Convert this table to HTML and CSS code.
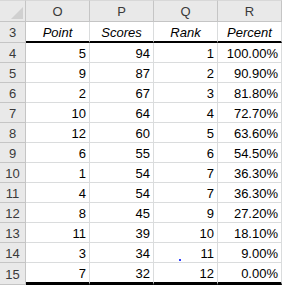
FILE: index.html
```html
<!DOCTYPE html>
<html>
<head>
<meta charset="utf-8">
<link rel="stylesheet" href="styles.css">
</head>
<body>
<div class="sheet">
  <div class="hdr corner"><svg class="tri" width="12" height="12" viewBox="0 0 12 12"><polygon points="12,0 12,12 0,12" fill="#d0d0d0"/></svg></div>
  <div class="hdr col">O</div>
  <div class="hdr col">P</div>
  <div class="hdr col">Q</div>
  <div class="hdr col">R</div>

  <div class="hdr rowh">3</div>
  <div class="cell title">Point</div>
  <div class="cell title">Scores</div>
  <div class="cell title">Rank</div>
  <div class="cell title">Percent</div>

  <div class="hdr rowh">4</div><div class="cell num">5</div><div class="cell num">94</div><div class="cell num">1</div><div class="cell num">100.00%</div>
  <div class="hdr rowh">5</div><div class="cell num">9</div><div class="cell num">87</div><div class="cell num">2</div><div class="cell num">90.90%</div>
  <div class="hdr rowh">6</div><div class="cell num">2</div><div class="cell num">67</div><div class="cell num">3</div><div class="cell num">81.80%</div>
  <div class="hdr rowh">7</div><div class="cell num">10</div><div class="cell num">64</div><div class="cell num">4</div><div class="cell num">72.70%</div>
  <div class="hdr rowh">8</div><div class="cell num">12</div><div class="cell num">60</div><div class="cell num">5</div><div class="cell num">63.60%</div>
  <div class="hdr rowh">9</div><div class="cell num">6</div><div class="cell num">55</div><div class="cell num">6</div><div class="cell num">54.50%</div>
  <div class="hdr rowh">10</div><div class="cell num">1</div><div class="cell num">54</div><div class="cell num">7</div><div class="cell num">36.30%</div>
  <div class="hdr rowh">11</div><div class="cell num">4</div><div class="cell num">54</div><div class="cell num">7</div><div class="cell num">36.30%</div>
  <div class="hdr rowh">12</div><div class="cell num">8</div><div class="cell num">45</div><div class="cell num">9</div><div class="cell num">27.20%</div>
  <div class="hdr rowh">13</div><div class="cell num">11</div><div class="cell num">39</div><div class="cell num">10</div><div class="cell num">18.10%</div>
  <div class="hdr rowh">14</div><div class="cell num">3</div><div class="cell num">34</div><div class="cell num">11</div><div class="cell num">9.00%</div>
  <div class="hdr rowh last">15</div><div class="cell num last">7</div><div class="cell num last">32</div><div class="cell num last">12</div><div class="cell num last">0.00%</div>
  <div class="dot"></div>
</div>
</body>
</html>
```

FILE: styles.css
```css
html, body {
  margin: 0;
  padding: 0;
  background: #ffffff;
}
.sheet {
  position: relative;
  display: grid;
  grid-template-columns: 26px 64px 64px 64px 64px;
  grid-template-rows: 22px 21px repeat(11, 20px) 22px;
  width: 283px;
  height: 285px;
  font-family: "Liberation Sans", Arial, sans-serif;
  font-size: 13px;
  color: #000;
  overflow: hidden;
}
.hdr {
  box-sizing: border-box;
  background: #e9e9e9;
  border-right: 1px solid #c5c5c5;
  border-bottom: 1px solid #c5c5c5;
  color: #3a3a3a;
  display: flex;
  align-items: center;
  justify-content: center;
}
.corner {
  position: relative;
  border-top: 1px solid #d8d8d8;
}
.tri {
  position: absolute;
  right: 2px;
  bottom: 2px;
}
.col {
  border-top: 1px solid #d8d8d8;
}
.rowh {
  padding-top: 1px;
}
.cell {
  box-sizing: border-box;
  border-right: 1px solid #dadcdd;
  border-bottom: 1px solid #dadcdd;
  display: flex;
  align-items: center;
  padding-top: 1px;
}
.title {
  justify-content: center;
  font-style: italic;
  border-bottom: 2px solid #000;
}
.num {
  justify-content: flex-end;
  padding-right: 3px;
}
.num.last {
  border-bottom: 3px solid #000;
}
.dot {
  position: absolute;
  left: 179px;
  top: 259px;
  width: 2px;
  height: 2px;
  background: #3040ff;
}
```
